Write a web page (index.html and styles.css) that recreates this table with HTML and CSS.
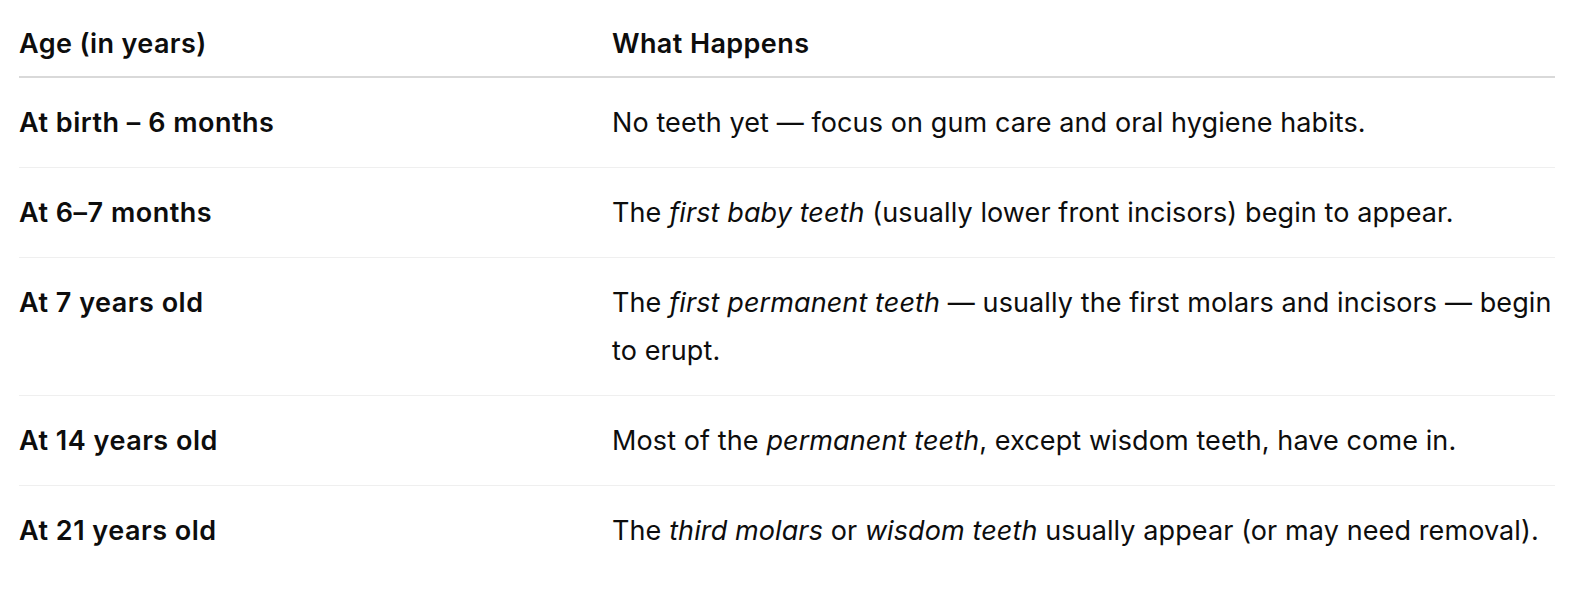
FILE: index.html
```html
<!DOCTYPE html>
<html lang="en">
<head>
<meta charset="utf-8">
<title>Teeth timeline</title>
<link rel="stylesheet" href="styles.css">
</head>
<body>
<div class="wrap">
<table class="tbl">
<thead>
<tr><th class="c1">Age (in years)</th><th>What Happens</th></tr>
</thead>
<tbody>
<tr><td class="c1"><strong>At birth – 6 months</strong></td><td>No teeth yet — focus on gum care and oral hygiene habits.</td></tr>
<tr><td class="c1"><strong>At 6–7 months</strong></td><td>The <em>first baby teeth</em> (usually lower front incisors) begin to appear.</td></tr>
<tr><td class="c1"><strong>At 7 years old</strong></td><td>The <em>first permanent teeth</em> — usually the first molars and incisors — begin to erupt.</td></tr>
<tr><td class="c1"><strong>At 14 years old</strong></td><td>Most of the <em>permanent teeth</em>, except wisdom teeth, have come in.</td></tr>
<tr><td class="c1"><strong>At 21 years old</strong></td><td>The <em>third molars</em> or <em>wisdom teeth</em> usually appear (or may need removal).</td></tr>
</tbody>
</table>
</div>
</body>
</html>
```
FILE: styles.css
```css
html, body {
  margin: 0;
  padding: 0;
  background: #ffffff;
}
body {
  font-family: Inter, "Noto Sans", "Liberation Sans", sans-serif;
  color: #0d0d0d;
  font-size: 27px;
  line-height: 48px;
  letter-spacing: 0.1px;
}
.wrap {
  padding: 0 19px;
}
.tbl {
  width: 100%;
  border-collapse: collapse;
  table-layout: fixed;
}
.tbl th {
  text-align: left;
  font-weight: 600;
  letter-spacing: 0.4px;
  padding: 20px 0 8px 0;
  border-bottom: 2px solid #d9d9d9;
}
.tbl td {
  padding: 20.5px 0;
  vertical-align: top;
  border-bottom: 1px solid #efefef;
}
.tbl tbody tr:last-child td {
  border-bottom: none;
}
.tbl .c1 {
  width: 593px;
}
.tbl strong {
  font-weight: 600;
  letter-spacing: 0.5px;
}
```
